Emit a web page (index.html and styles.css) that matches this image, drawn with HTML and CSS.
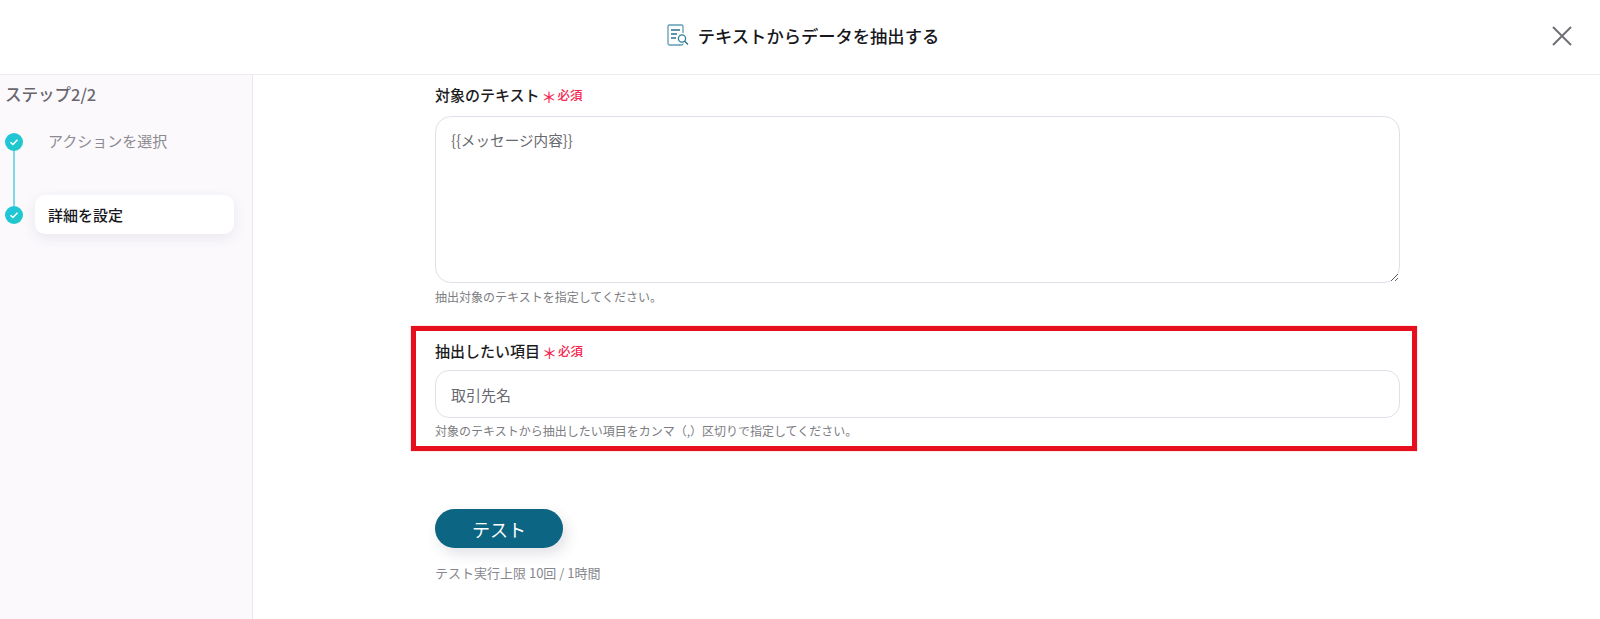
FILE: index.html
```html
<!DOCTYPE html>
<html lang="ja">
<head>
<meta charset="utf-8">
<title>テキストからデータを抽出する</title>
<link rel="stylesheet" href="styles.css">
</head>
<body>
<header class="topbar">
  <div class="title">
    <svg class="title-icon" width="24" height="24" viewBox="0 0 24 24" fill="none" stroke="#2f7f9c" stroke-width="1.3">
      <path d="M17 10V3.5A1.5 1.5 0 0 0 15.5 2H3.5A1.5 1.5 0 0 0 2 3.5v17A1.5 1.5 0 0 0 3.5 22h12a1.5 1.5 0 0 0 1.5-1.5" stroke="#5d9db5"/>
      <path d="M5 7h9M5 11h6M5 15h5" stroke="#2f6f8c"/>
      <circle cx="16" cy="15.5" r="3.6" stroke="#2f7f9c"/>
      <path d="M18.7 18.2L22 21.5" stroke="#2f6f8c"/>
    </svg>
    <span>テキストからデータを抽出する</span>
  </div>
  <button class="close" aria-label="閉じる">
    <svg width="20" height="20" viewBox="0 0 20 20" stroke="#6f6f76" stroke-width="2" fill="none"><path d="M1 1l18 18M19 1L1 19"/></svg>
  </button>
</header>
<div class="layout">
  <aside class="sidebar">
    <h2 class="step-title">ステップ2/2</h2>
    <ol class="steps">
      <li class="step step-done">
        <span class="dot"><svg width="10" height="10" viewBox="0 0 10 10" fill="none" stroke="#fff" stroke-width="1.5"><path d="M1.5 5.2l2.4 2.3 4.6-4.8"/></svg></span>
        <span class="step-label">アクションを選択</span>
      </li>
      <li class="step step-current">
        <span class="dot"><svg width="10" height="10" viewBox="0 0 10 10" fill="none" stroke="#fff" stroke-width="1.5"><path d="M1.5 5.2l2.4 2.3 4.6-4.8"/></svg></span>
        <span class="step-label">詳細を設定</span>
      </li>
    </ol>
  </aside>
  <main class="main">
    <section class="field">
      <div class="label"><strong>対象のテキスト</strong><span class="star">＊</span><span class="req">必須</span></div>
      <textarea class="control area">{{メッセージ内容}}</textarea>
      <p class="help">抽出対象のテキストを指定してください。</p>
    </section>
    <section class="field highlighted">
      <div class="label"><strong>抽出したい項目</strong><span class="star">＊</span><span class="req">必須</span></div>
      <input class="control single" type="text" value="取引先名">
      <p class="help">対象のテキストから抽出したい項目をカンマ（,）区切りで指定してください。</p>
    </section>
    <button class="test">テスト</button>
    <p class="limit">テスト実行上限 10回 / 1時間</p>
  </main>
</div>
</body>
</html>
```
FILE: styles.css
```css
* { box-sizing: border-box; }
html, body { margin: 0; height: 100%; }
body {
  font-family: "Noto Sans CJK JP", "Noto Sans", sans-serif;
  color: #1b1b20;
  background: #fff;
  overflow: hidden;
  display: flex;
  flex-direction: column;
}
.topbar {
  height: 75px;
  flex: none;
  border-bottom: 1px solid #ececee;
  display: flex;
  align-items: center;
  justify-content: center;
  padding-bottom: 4px;
  position: relative;
}
.title {
  display: flex;
  align-items: center;
  gap: 8px;
  padding-left: 5px;
  font-size: 17.3px;
  font-weight: 500;
  color: #17171c;
}
.title-icon { display: block; }
.close {
  position: absolute;
  right: 28px;
  top: 26px;
  width: 20px;
  height: 20px;
  padding: 0;
  border: 0;
  background: none;
}
.close svg { display: block; }
.layout { flex: 1; display: flex; min-height: 0; }
.sidebar {
  width: 253px;
  flex: none;
  background: #fbf9fc;
  border-right: 1px solid #e8e8ec;
  padding: 9px 0 0 5px;
}
.step-title {
  margin: 0;
  font-size: 16.5px;
  line-height: 20px;
  font-weight: 500;
  color: #69666e;
}
.steps {
  list-style: none;
  margin: 18px 0 0;
  padding: 0;
  position: relative;
}
.step {
  display: flex;
  align-items: center;
  height: 39px;
  position: relative;
}
.step + .step { margin-top: 34px; }
.step-done::after {
  content: "";
  position: absolute;
  left: 8px;
  top: 28px;
  width: 2px;
  height: 56px;
  background: #7dd9e9;
}
.dot {
  width: 18px;
  height: 18px;
  border-radius: 50%;
  background: linear-gradient(135deg, #1fc4e0, #20c9c4);
  display: flex;
  align-items: center;
  justify-content: center;
  flex: none;
  position: relative;
  z-index: 1;
}
.step-label {
  font-size: 15px;
  margin-left: 12px;
  width: 199px;
  height: 39px;
  line-height: 37px;
  padding-left: 13px;
  border-radius: 10px;
  color: #8d8a92;
}
.step-current .step-label {
  line-height: 39px;
  background: #fff;
  color: #17171c;
  font-weight: 500;
  box-shadow: 0 4px 14px rgba(60, 50, 90, .09);
}
.main {
  flex: 1;
  padding: 9px 0 0 182px;
}
.field { width: 965px; }
.label {
  display: flex;
  align-items: center;
  height: 22px;
  font-size: 15px;
  line-height: 22px;
}
.label strong { font-weight: 500; }
.star {
  color: #f5254f;
  font-size: 15px;
  line-height: 22px;
  margin-left: 2px;
  height: 22px;
  padding-top: 2px;
  font-weight: 500;
}
.req {
  color: #f5254f;
  font-size: 12.5px;
  font-weight: 500;
  margin-left: 1px;
}
.control {
  display: block;
  width: 100%;
  font: inherit;
  font-size: 15px;
  color: #68686f;
  background: #fff;
  border: 1px solid #dfe1e9;
  border-radius: 16px;
  padding: 0 15px;
  outline: 0;
}
.area {
  font-size: 14.6px;
  height: 167px;
  margin-top: 10px;
  padding-top: 11px;
  line-height: 24px;
  resize: vertical;
}
.single { height: 48px; margin-top: 8px; border-radius: 14px; }
.help {
  margin: 5px 0 0;
  font-size: 12px;
  line-height: 17px;
  color: #7c7c82;
}
.highlighted {
  width: 1006px;
  height: 125px;
  margin: 21px 0 0 -24px;
  padding: 9px 19px 0;
  border: 5px solid #e60f1d;
  box-shadow: 0 0 1px rgba(230, 15, 29, .5);
}
.highlighted .help { margin-top: 4px; }
.highlighted .label,
.highlighted .control,
.highlighted .help { width: 965px; }
.test {
  display: block;
  width: 128px;
  height: 39px;
  margin-top: 58px;
  border: 0;
  border-radius: 20px;
  background: #0c6582;
  color: #fff;
  font: inherit;
  font-size: 18px;
  box-shadow: 4px 6px 14px rgba(50, 50, 90, .14);
}
.limit {
  margin: 16px 0 0;
  font-size: 13px;
  line-height: 18px;
  color: #87878d;
}
```
